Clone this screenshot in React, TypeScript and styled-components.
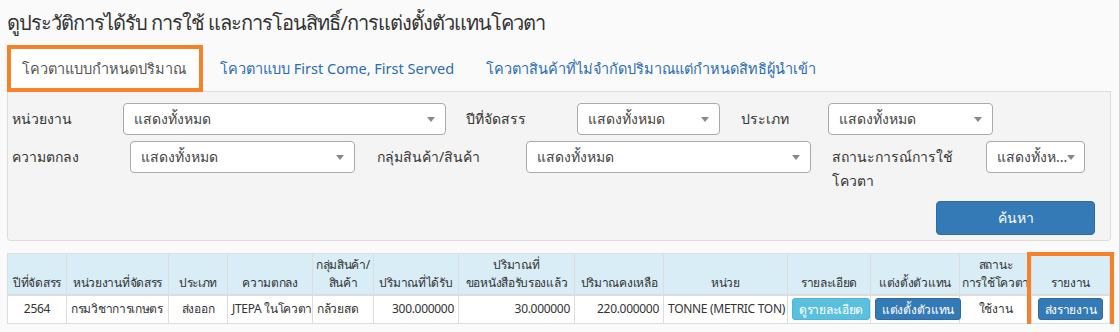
import { Fragment } from 'react';
import styled, { createGlobalStyle } from 'styled-components';

const GlobalStyle = createGlobalStyle`
  body {
    margin: 0;
    background: #fafafa;
    color: #333;
    font-family: 'Noto Sans', 'DejaVu Sans', sans-serif;
  }
  * { box-sizing: border-box; }
`;

const Page = styled.div`
  padding: 6px 8px 0 7px;
`;
const Title = styled.h1`
  margin: 0;
  font-size: 20px;
  font-weight: normal;
  line-height: 34px;
  letter-spacing: -1px;
  color: #333;
`;
const Tabs = styled.ul`
  display: flex;
  list-style: none;
  margin: 5px 0 0;
  padding: 0;
  border-bottom: 1px solid #ddd;
`;
const Tab = styled.li<{ $active?: boolean }>`
  height: 47px;
  margin: 0 2px -1px 0;
  padding: 0 ${p => (p.$active ? 17 : 15)}px 0 15px;
  display: flex;
  align-items: center;
  font-size: 14.5px;
  color: ${p => (p.$active ? '#555' : '#2a6db5')};
  background: ${p => (p.$active ? '#fff' : 'transparent')};
  outline: ${p => (p.$active ? '4px solid #f7812a' : 'none')};
  outline-offset: -4px;
`;
const FilterPanel = styled.div`
  background: #f4f4f4;
  border: 1px solid #ddd;
  border-top: 0;
  border-radius: 0 0 4px 4px;
  padding: 11px 15px 5px 4px;
`;
const FilterRow = styled.div`
  display: flex;
  align-items: flex-start;
  margin-bottom: 6px;
`;
const FieldLabel = styled.label<{ $w: number; $ml: number }>`
  width: ${p => p.$w}px;
  margin-left: ${p => p.$ml}px;
  padding: 4px 20px 0 0;
  font-size: 14px;
  line-height: 24px;
  color: #333;
`;
const SelectBox = styled.div<{ $w: number }>`
  width: ${p => p.$w}px;
  height: 32px;
  display: flex;
  align-items: center;
  justify-content: space-between;
  padding: 0 10px;
  background: #fff;
  border: 1px solid #aaa;
  border-radius: 4px;
  font-size: 14px;
  color: #444;
  white-space: nowrap;
  overflow: hidden;
`;
const Arrow = styled.span`
  flex: none;
  width: 0;
  height: 0;
  border-left: 4px solid transparent;
  border-right: 4px solid transparent;
  border-top: 5px solid #888;
`;
const ButtonRow = styled.div`
  display: flex;
  justify-content: flex-end;
  padding-top: 2px;
`;
const SearchButton = styled.button`
  width: 159px;
  height: 34px;
  background: #337ab7;
  border: 1px solid #2e6da4;
  border-radius: 4px;
  color: #fff;
  font-family: inherit;
  font-size: 14px;
`;
const TableWrap = styled.div`
  position: relative;
  margin-top: 12px;
`;
const Table = styled.table`
  width: 1102px;
  table-layout: fixed;
  border-collapse: collapse;
  font-size: 12px;
  letter-spacing: -0.3px;
  background: #fff;
`;
const Col = styled.col<{ $w: number }>`
  width: ${p => p.$w}px;
`;
const Th = styled.th`
  background: #d9edf7;
  border: 1px solid #ddd;
  border-bottom: 2px solid #ddd;
  padding: 2px 2px;
  line-height: 18px;
  font-weight: normal;
  text-align: center;
  vertical-align: bottom;
  white-space: nowrap;
  color: #333;
`;
const Td = styled.td<{ $align?: string }>`
  border: 1px solid #ddd;
  padding: 2px 4px;
  height: 28px;
  line-height: 18px;
  text-align: ${p => p.$align || 'center'};
  white-space: nowrap;
  color: #333;
`;
const ActionButton = styled.button<{ $variant: 'info' | 'primary' }>`
  height: 22px;
  padding: 0 6px;
  font-family: inherit;
  font-size: 12px;
  letter-spacing: -0.3px;
  color: #fff;
  background: ${p => (p.$variant === 'info' ? '#5bc0de' : '#337ab7')};
  border: 1px solid ${p => (p.$variant === 'info' ? '#46b8da' : '#2e6da4')};
  border-radius: 3px;
`;
const Highlight = styled.div`
  position: absolute;
  top: -1px;
  left: 1020px;
  width: 87px;
  height: 76px;
  border: 4px solid #f7812a;
  pointer-events: none;
`;

type Field = { label: string; lw: number; ml: number; sw: number; short?: boolean };

const rowOne: Field[] = [
  { label: 'หน่วยงาน', lw: 111, ml: 0, sw: 323 },
  { label: 'ปีที่จัดสรร', lw: 111, ml: 20, sw: 143 },
  { label: 'ประเภท', lw: 87, ml: 21, sw: 165 },
];
const rowTwo: Field[] = [
  { label: 'ความตกลง', lw: 118, ml: 0, sw: 225 },
  { label: 'กลุ่มสินค้า/สินค้า', lw: 149, ml: 22, sw: 285 },
  { label: 'สถานะการณ์การใช้โควตา', lw: 154, ml: 21, sw: 99, short: true },
];
const cols = [59, 102, 59, 85, 61, 85, 116, 89, 124, 83, 89, 72, 78];
const headers = [
  ['ปีที่จัดสรร'],
  ['หน่วยงานที่จัดสรร'],
  ['ประเภท'],
  ['ความตกลง'],
  ['กลุ่มสินค้า/', 'สินค้า'],
  ['ปริมาณที่ได้รับ'],
  ['ปริมาณที่', 'ขอหนังสือรับรองแล้ว'],
  ['ปริมาณคงเหลือ'],
  ['หน่วย'],
  ['รายละเอียด'],
  ['แต่งตั้งตัวแทน'],
  ['สถานะ', 'การใช้โควตา'],
  ['รายงาน'],
];

function FilterFields({ items }: { items: Field[] }) {
  return (
    <FilterRow>
      {items.map(f => (
        <Fragment key={f.label}>
          <FieldLabel $w={f.lw} $ml={f.ml}>
            {f.label}
          </FieldLabel>
          <SelectBox $w={f.sw}>
            {f.short ? 'แสดงทั้งห...' : 'แสดงทั้งหมด'}
            <Arrow />
          </SelectBox>
        </Fragment>
      ))}
    </FilterRow>
  );
}

function App() {
  return (
    <Page>
      <GlobalStyle />
      <Title>ดูประวัติการได้รับ การใช้ และการโอนสิทธิ์/การแต่งตั้งตัวแทนโควตา</Title>
      <Tabs>
        <Tab $active>โควตาแบบกำหนดปริมาณ</Tab>
        <Tab>โควตาแบบ First Come, First Served</Tab>
        <Tab>โควตาสินค้าที่ไม่จำกัดปริมาณแต่กำหนดสิทธิผู้นำเข้า</Tab>
      </Tabs>
      <FilterPanel>
        <FilterFields items={rowOne} />
        <FilterFields items={rowTwo} />
        <ButtonRow>
          <SearchButton>ค้นหา</SearchButton>
        </ButtonRow>
      </FilterPanel>
      <TableWrap>
        <Table>
          <colgroup>
            {cols.map((w, i) => (
              <Col key={i} $w={w} />
            ))}
          </colgroup>
          <thead>
            <tr>
              {headers.map(h => (
                <Th key={h.join()}>
                  {h.map((line, i) => (
                    <Fragment key={line}>
                      {i > 0 && <br />}
                      {line}
                    </Fragment>
                  ))}
                </Th>
              ))}
            </tr>
          </thead>
          <tbody>
            <tr>
              <Td>2564</Td>
              <Td $align="left">กรมวิชาการเกษตร</Td>
              <Td>ส่งออก</Td>
              <Td>JTEPA ในโควตา</Td>
              <Td $align="left">กล้วยสด</Td>
              <Td $align="right">300.000000</Td>
              <Td $align="right">30.000000</Td>
              <Td $align="right">220.000000</Td>
              <Td $align="left">TONNE (METRIC TON)</Td>
              <Td>
                <ActionButton $variant="info">ดูรายละเอียด</ActionButton>
              </Td>
              <Td>
                <ActionButton $variant="primary">แต่งตั้งตัวแทน</ActionButton>
              </Td>
              <Td>ใช้งาน</Td>
              <Td>
                <ActionButton $variant="primary">ส่งรายงาน</ActionButton>
              </Td>
            </tr>
          </tbody>
        </Table>
        <Highlight />
      </TableWrap>
    </Page>
  );
}

export default App;
